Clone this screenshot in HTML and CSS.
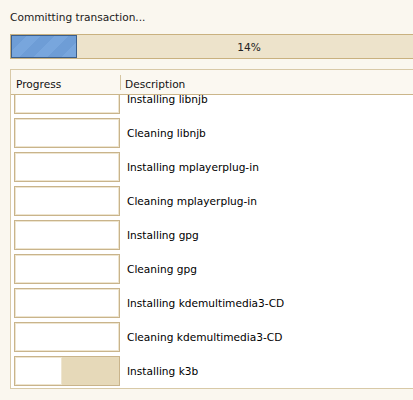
FILE: index.html
```html
<!DOCTYPE html>
<html>
<head>
<meta charset="utf-8">
<link rel="stylesheet" href="styles.css">
</head>
<body>
<div class="frame">
<div class="title">Committing transaction...</div>
<div class="bar">
  <div class="bar-fill"></div>
  <div class="bar-text">14%</div>
</div>
<div class="table">
  <div class="header">
    <div class="hcell hprog">Progress</div>
    <div class="hsep"></div>
    <div class="hcell hdesc">Description</div>
  </div>
  <div class="list">
    <div class="rows">
      <div class="row first"><div class="pbox"><div class="pfill" style="width:100%"></div></div><span class="desc">Installing libnjb</span></div>
      <div class="row"><div class="pbox"><div class="pfill" style="width:100%"></div></div><span class="desc">Cleaning libnjb</span></div>
      <div class="row"><div class="pbox"><div class="pfill" style="width:100%"></div></div><span class="desc">Installing mplayerplug-in</span></div>
      <div class="row"><div class="pbox"><div class="pfill" style="width:100%"></div></div><span class="desc">Cleaning mplayerplug-in</span></div>
      <div class="row"><div class="pbox"><div class="pfill" style="width:100%"></div></div><span class="desc">Installing gpg</span></div>
      <div class="row"><div class="pbox"><div class="pfill" style="width:100%"></div></div><span class="desc">Cleaning gpg</span></div>
      <div class="row"><div class="pbox"><div class="pfill" style="width:100%"></div></div><span class="desc">Installing kdemultimedia3-CD</span></div>
      <div class="row"><div class="pbox"><div class="pfill" style="width:100%"></div></div><span class="desc">Cleaning kdemultimedia3-CD</span></div>
      <div class="row"><div class="pbox"><div class="pfill" style="width:47px"></div></div><span class="desc">Installing k3b</span></div>
    </div>
  </div>
</div>
</div>
</body>
</html>
```
FILE: styles.css
```css
html, body {
  margin: 0;
  padding: 0;
  background: #faf7ef;
  overflow: hidden;
}
body {
  font-family: "DejaVu Sans", sans-serif;
  font-size: 10.6px;
  color: #111;
}
.frame {
  width: 413px;
  height: 400px;
  overflow: hidden;
}
.title {
  padding: 10px 0 0 10px;
  height: 14px;
  line-height: 14px;
  color: #1a1a1a;
}
.bar {
  position: relative;
  margin: 10px 0 0 10px;
  width: 476px;
  height: 23px;
  border: 1px solid #c9b17f;
  background: #ede3cb;
  display: flex;
  align-items: center;
  justify-content: center;
}
.bar-fill {
  position: absolute;
  left: 0;
  top: 0;
  width: 64px;
  height: 21px;
  border: 1px solid #3b5e8a;
  background: repeating-linear-gradient(135deg, #6e9dd6 0px, #6e9dd6 10px, #78a6dd 10px, #78a6dd 20px);
}
.bar-text {
  position: relative;
  color: #222;
}
.table {
  margin: 10px 0 0 10px;
  width: 476px;
  height: 318px;
  border: 1px solid #d8c9a7;
  background: #fff;
  display: flex;
  flex-direction: column;
}
.header {
  height: 24px;
  border-bottom: 1px solid #cbb68a;
  background: #fbf8f1;
  display: flex;
  align-items: center;
}
.hcell {
  line-height: 14px;
  margin-top: 4px;
}
.hprog {
  width: 104px;
  padding-left: 5px;
}
.hsep {
  width: 1px;
  height: 15px;
  background: #d6c6a2;
}
.hdesc {
  padding-left: 4px;
}
.list {
  flex: 1;
  overflow: hidden;
}
.row {
  height: 34px;
  display: flex;
  align-items: center;
  padding-left: 3px;
}
.row.first {
  margin-top: -13px;
}
.pbox {
  box-sizing: border-box;
  width: 106px;
  height: 30px;
  border: 1px solid #c9b48b;
  background: #e6d9b9;
  position: relative;
}
.pfill {
  box-sizing: border-box;
  height: 100%;
  background: #fff;
  border: 1px solid #eee5d0;
}
.desc {
  margin-left: 7px;
  color: #000;
}
```
